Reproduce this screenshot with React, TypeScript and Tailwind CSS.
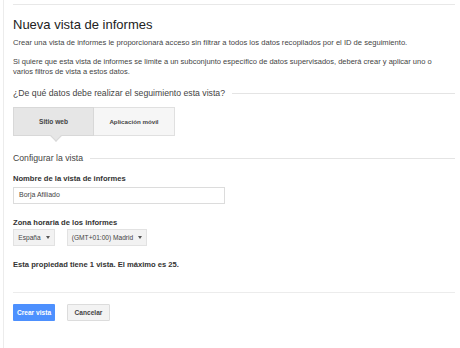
const font = { fontFamily: '"Liberation Sans", Arial, sans-serif' };

function Caret() {
  return <span className="ml-[5px] inline-block h-0 w-0 border-x-[2.5px] border-t-[3px] border-x-transparent border-t-[#555]" />;
}

function SectionHead({ text }: { text: string }) {
  return (
    <div className="flex items-center gap-[7px]">
      <span className="whitespace-nowrap text-[8.7px] leading-[11px] text-[#444]">{text}</span>
      <div className="h-px flex-1 bg-[#e4e4e4]" />
    </div>
  );
}

export default function App() {
  return (
    <div className="h-[348px] w-[460px] overflow-hidden bg-white" style={font}>
      <div className="ml-[3px] h-full border-l border-[#ececec] pl-[9px] pr-[5px] pt-[4px] text-[#333]">
        <div className="h-px bg-[#e8e8e8]" />
        <h1 className="mt-[11px] text-[13px] leading-[17px] text-[#222]">Nueva vista de informes</h1>
        <p className="mt-[5px] text-[7.6px] leading-[10px] text-[#444]">
          Crear una vista de informes le proporcionará acceso sin filtrar a todos los datos recopilados por el ID de seguimiento.
        </p>
        <p className="mt-[9px] w-[438px] text-[7.5px] leading-[10px] text-[#444]">
          Si quiere que esta vista de informes se limite a un subconjunto específico de datos supervisados, deberá crear y aplicar uno o varios filtros de vista a estos datos.
        </p>
        <div className="mt-[11px]">
          <SectionHead text="¿De qué datos debe realizar el seguimiento esta vista?" />
        </div>
        <div className="mt-[8px] flex">
          <div className="relative flex h-[29px] w-[81px] items-center justify-center border border-[#d8d8d8] bg-[#e6e6e6] text-[6.6px] font-bold text-[#444]">
            Sitio web
            <span className="absolute -bottom-[5px] left-[38px] h-[8px] w-[8px] rotate-45 border-b border-r border-[#d8d8d8] bg-[#e6e6e6]" />
          </div>
          <div className="flex h-[29px] w-[81px] items-center justify-center border border-l-0 border-[#e0e0e0] bg-[#f6f6f6] text-[6.2px] font-bold text-[#444]">
            Aplicación móvil
          </div>
        </div>
        <div className="mt-[17px]">
          <SectionHead text="Configurar la vista" />
        </div>
        <div className="mt-[10px] text-[7.6px] font-bold leading-[10px] text-[#333]">Nombre de la vista de informes</div>
        <div className="mt-[3px] flex h-[17px] w-[212px] items-center border border-[#dcdcdc] px-[5px] text-[7px] text-[#444]">
          Borja Afiliado
        </div>
        <div className="mt-[14px] text-[7.6px] font-bold leading-[10px] text-[#333]">Zona horaria de los informes</div>
        <div className="mt-[1px] flex gap-[12px]">
          <div className="flex h-[17px] w-[42px] items-center justify-center border border-[#e2e2e2] bg-[#f2f2f2] text-[6.6px] text-[#444]">
            España
            <Caret />
          </div>
          <div className="flex h-[17px] w-[80px] items-center justify-center border border-[#e2e2e2] bg-[#f2f2f2] text-[6.6px] text-[#444]">
            (GMT+01:00) Madrid
            <Caret />
          </div>
        </div>
        <div className="mt-[14px] text-[7.6px] font-bold leading-[10px] text-[#333]">
          Esta propiedad tiene 1 vista. El máximo es 25.
        </div>
        <div className="mt-[22px] h-px bg-[#ececec]" />
        <div className="mt-[11px] flex gap-[12px]">
          <div className="flex h-[17px] w-[42px] items-center justify-center rounded-[1px] bg-[#4d90fe] text-[6.6px] font-bold text-white">
            Crear vista
          </div>
          <div className="flex h-[17px] w-[43px] items-center justify-center rounded-[1px] border border-[#dcdcdc] bg-[#f3f3f3] text-[6.6px] font-bold text-[#444]">
            Cancelar
          </div>
        </div>
      </div>
    </div>
  );
}
